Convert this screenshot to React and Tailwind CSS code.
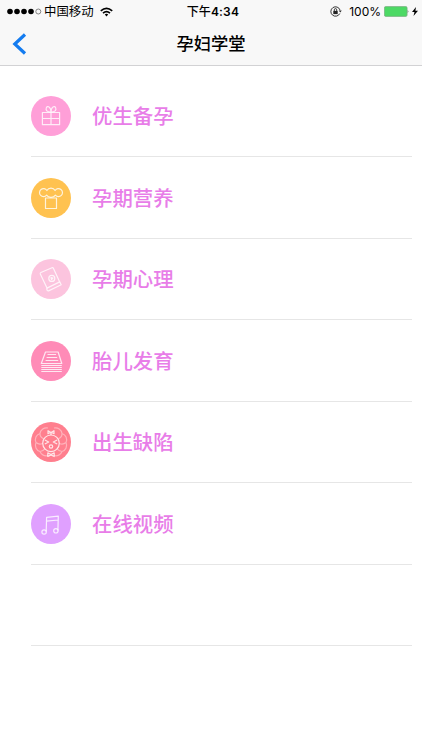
import React from "react";

const cjk = "font-['Liberation_Sans','Noto_Sans_CJK_SC',sans-serif]";

function GiftIcon() {
  return (
    <>
      <path d="M11.4 16.5h17.2v12.2H11.4zM20 16.5v12.2M11.4 22.5h17.2" />
      <path d="M20 16.2c-4 0-5.600-2-4.700-4.300 1-2.500 4.700-1.600 4.700 4.300zM20 16.2c4 0 5.600-2 4.700-4.300-1-2.500-4.700-1.600-4.700 4.300z" />
    </>
  );
}

function ChefIcon() {
  return (
    <>
      <path d="M15.6 17.2a4 4 0 1 1 .3-4.700a4.600 4.300 0 0 1 8.200 0a4 4 0 1 1 .3 4.700a5 4 0 0 1-8.800 0z" />
      <path d="M14.5 20h11v10.500h-11z" />
    </>
  );
}

function BookIcon() {
  return (
    <>
      <path d="M9.9 13.5L21 8.800q1-.4 1.500.6l6.200 13.500-12.700 6.200L9.300 15q-.4-1 .6-1.500z" />
      <path d="M16 29.1q-.6 2.900 1.600 2.800l12.600-6.200-1.500-2.800" />
      <circle cx="20.8" cy="19.4" r="3" />
      <path d="M20 18.500l1.900.6-1.400 1.500z" />
    </>
  );
}

function PapersIcon() {
  return (
    <>
      <path d="M14.500 11h12.600l3.700 11.500H10.300z" />
      <path d="M16.500 13.500h8.600M15.600 16.500h10.600M14.600 19.500h12.600" />
      <path d="M10.300 24.500h20.500M10.300 26.500h20.500M10.300 28.500h20.500M10.300 30.500h20.500" />
    </>
  );
}

function BabyIcon() {
  return (
    <>
      <path
        opacity="0.5"
        d="M17 6a6.500 6.500 0 0 0-8 5.500a6.500 6.500 0 0 0-4 9a6.500 6.500 0 0 0 4 9a6.500 6.500 0 0 0 8 4M23 6a6.500 6.500 0 0 1 8 5.500a6.500 6.500 0 0 1 4 9a6.500 6.500 0 0 1-4 9a6.500 6.500 0 0 1-8 4M9 11.500q0 4 4 5.500M31 11.500q0 4-4 5.500M5 20.500q3 2.500 6.500 1M35 20.500q-3 2.500-6.500 1M9 29.500q3.500-.5 5-3M31 29.500q-3.500-.5-5-3"
      />
      <circle cx="20" cy="21.300" r="8.300" />
      <path d="M20 13v-2.300M19.600 10.300l-2.600-1.600v3zM20.400 10.300l2.600-1.600v3z" />
      <path d="M13.800 18l3.900 2-3.900 2M26.200 18l-3.900 2 3.900 2" />
      <circle cx="20" cy="24.500" r="1.700" />
      <path d="M19.600 32.300l-2.800-1.400v3.600l2.800-1.400h.8l2.800 1.400v-3.600l-2.800 1.400z" />
    </>
  );
}

function MusicIcon() {
  return (
    <>
      <path d="M15.2 27.500l.4-14.200 11.700-1.200-.4 14.400M15.500 17.200l11.700-1.200" />
      <circle cx="13.1" cy="28" r="2.200" />
      <circle cx="24.900" cy="26.800" r="2.200" />
    </>
  );
}

const items = [
  { title: "优生备孕", color: "bg-[#ff9fd8]", Icon: GiftIcon },
  { title: "孕期营养", color: "bg-[#ffc250]", Icon: ChefIcon },
  { title: "孕期心理", color: "bg-[#fcc4de]", Icon: BookIcon },
  { title: "胎儿发育", color: "bg-[#ff8bb7]", Icon: PapersIcon },
  { title: "出生缺陷", color: "bg-[#ff7f8e]", Icon: BabyIcon },
  { title: "在线视频", color: "bg-[#e0a0ff]", Icon: MusicIcon },
];

function StatusBar() {
  return (
    <div className="grid h-[22px] grid-cols-[1fr_auto_1fr] items-center text-[12px] leading-[22px] text-black">
      <div className="flex items-center pl-[7px]">
        <svg className="h-[7px] w-[35px]" viewBox="0 0 35 7">
          <circle cx="3" cy="3.5" r="2.8" />
          <circle cx="10" cy="3.5" r="2.8" />
          <circle cx="17" cy="3.5" r="2.8" />
          <circle cx="24" cy="3.5" r="2.8" />
          <circle cx="31.3" cy="3.5" r="2.5" fill="none" stroke="#555" strokeWidth="0.7" />
        </svg>
        <span className="ml-[2px] pt-px text-[12.4px]">中国移动</span>
        <svg className="ml-[6px] h-[10px] w-[13px]" viewBox="0 0 13 10" fill="none" stroke="#000" strokeWidth="1.7">
          <path d="M.8 3.800q5.700-5 11.400 0M3 6.100q3.500-3 7 0" />
          <path d="M4.800 7.500q1.700-1.300 3.400 0L6.500 9.400z" fill="#000" stroke="none" />
        </svg>
      </div>
      <div className="flex items-center pl-[4px] pt-px font-medium">
        <span className="text-[12px]">下午</span>
        <span className="font-['Inter',sans-serif] text-[12px] font-semibold tracking-[0.2px]">4:34</span>
      </div>
      <div className="flex items-center justify-end pr-[4px]">
        <svg className="mr-[7px] h-[11px] w-[12px]" viewBox="0 0 12 11" fill="none" stroke="#222" strokeWidth="0.9">
          <path d="M9.800 7.500a4.700 4.700 0 1 1 .2-3.500" />
          <path d="M8.700 4.500h3l-1.400 2z" fill="#222" stroke="none" />
          <path d="M3.300 4.900h4.400v3.200H3.300z" fill="#222" stroke="none" />
          <path d="M4.300 5V3.800a1.200 1.200 0 0 1 2.400 0V5" />
        </svg>
        <span className="pt-px font-['Inter',sans-serif] text-[12px]">100%</span>
        <svg className="ml-[3px] h-[11px] w-[25px]" viewBox="0 0 25 11">
          <rect x="0.4" y="0.6" width="22.7" height="9.8" rx="1.3" fill="#4cd964" stroke="#78a97f" strokeWidth="0.7" />
          <path d="M23.800 4q1.200 1.500 0 3z" fill="#333" />
        </svg>
        <svg className="ml-[3px] h-[9px] w-[6px]" viewBox="0 0 6 9">
          <path d="M4 0L0 5h2.500L1.500 9 6 3.700H3.400z" />
        </svg>
      </div>
    </div>
  );
}

function App() {
  return (
    <div className={`min-h-screen w-full bg-white ${cjk}`}>
      <header className="h-[66px] border-b border-[#d2d2d4] bg-[#f8f8f8]">
        <StatusBar />
        <div className="grid h-[43px] grid-cols-[40px_1fr_40px] items-center">
          <button className="pl-[12px]">
            <svg className="h-[22px] w-[15px]" viewBox="0 0 15 22" fill="none" stroke="#147cf0" strokeWidth="3.2">
              <path d="M13 1.500L2.800 11 13 20.500" />
            </svg>
          </button>
          <h1 className="pt-[3px] text-center text-[17.3px] font-medium text-black">孕妇学堂</h1>
        </div>
      </header>
      <ul className="ml-[31px] mr-[10.5px] pt-[9.5px]">
        {items.map(({ title, color, Icon }) => (
          <li key={title} className="flex h-[81.5px] items-center border-b border-[#e6e6e6] pt-px">
            <div className={`size-[40px] rounded-full ${color}`}>
              <svg
                className="size-[40px]"
                viewBox="0 0 40 40"
                fill="none"
                stroke="#fff"
                strokeOpacity="0.8"
                strokeWidth="1.2"
                strokeLinejoin="round"
              >
                <Icon />
              </svg>
            </div>
            <span className="ml-[21px] pt-[2.5px] text-[20.4px] font-medium text-[#e87de8]">{title}</span>
          </li>
        ))}
        <li className="h-[81.5px] border-b border-[#e6e6e6]" />
      </ul>
    </div>
  );
}

export default App;
